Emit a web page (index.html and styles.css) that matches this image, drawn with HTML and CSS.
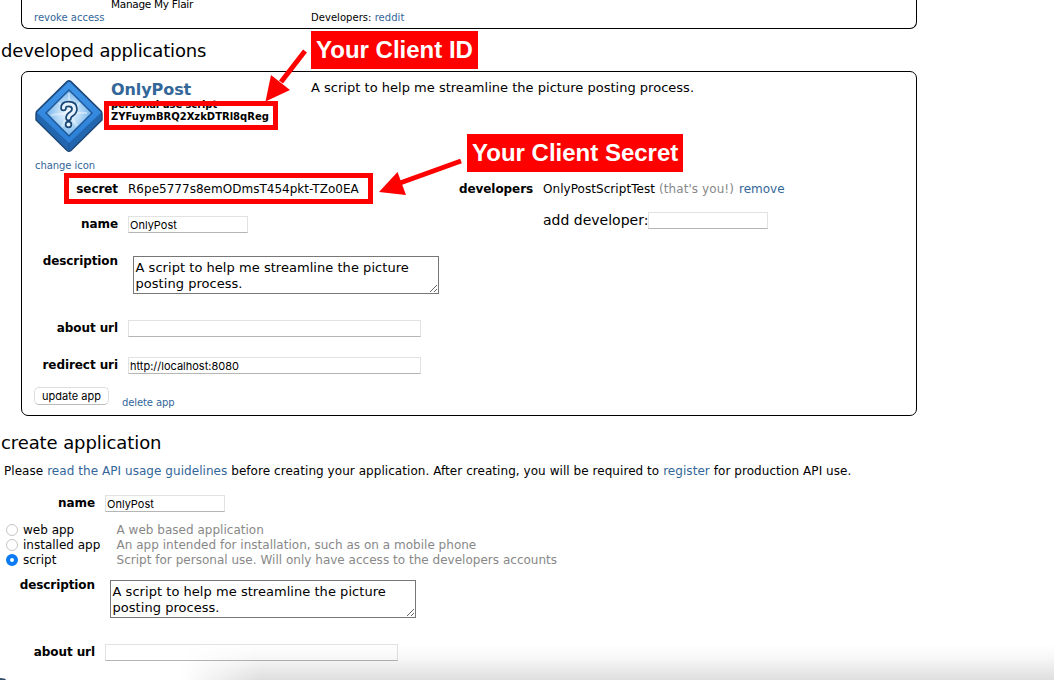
FILE: index.html
```
<!DOCTYPE html>
<html lang="en">
<head>
<meta charset="utf-8">
<title>authorized applications</title>
<link rel="stylesheet" href="styles.css">
</head>
<body>
<main class="page">
  <section class="card authorized">
    <div class="auth-left">
      <span class="scope">Manage My Flair</span>
      <a class="small revoke">revoke access</a>
    </div>
    <div class="small auth-devs">Developers: <a>reddit</a></div>
  </section>

  <h1 class="heading">developed applications</h1>

  <section class="card app">
    <header class="app-head">
      <svg class="app-icon" viewBox="0 0 68 74" width="68" height="74">
        <defs>
          <linearGradient id="rim" x1="0" y1="0" x2="0" y2="1"><stop offset="0" stop-color="#3f95e8"/><stop offset="1" stop-color="#2b7fd6"/></linearGradient>
          <radialGradient id="face"><stop offset="0" stop-color="#f4faff"/><stop offset=".5" stop-color="#b9dbf6"/><stop offset="1" stop-color="#6fb2ec"/></radialGradient>
        </defs>
        <path d="M32 2.500Q34 1 36 2.500L66 32Q67 33 67 35V41L36 71.500Q34 73 32 71.500L1 41V35Q1 33 2 32Z" fill="#2266b0" stroke="#1c4675" stroke-width="1.400"/>
        <path d="M34 2.500L66 33.500L34 64L2 33.500Z" fill="url(#rim)"/>
        <path d="M34 64V71" stroke="#1c5596" stroke-width="1"/>
        <path d="M34 11L57 34L34 57L11 34Z" fill="url(#face)" stroke="#1c5596" stroke-width="1.400"/>
        <path d="M34 34L24 24M34 34L45 24M34 34L16 36M34 34L52 34M34 34L27 48M34 34L42 47M34 34L34 14" stroke="#fff" stroke-opacity=".4" stroke-width="2"/>
        <path d="M28.500 29Q28.500 25 33.500 25Q39.500 25 39.500 30Q39.500 33 36.500 34.800Q33.500 36.500 33.500 39" fill="none" stroke="#194572" stroke-width="6.600" stroke-linecap="round"/>
        <circle cx="33.500" cy="45.500" r="3.700" fill="#194572"/>
        <path d="M28.500 29Q28.500 25 33.500 25Q39.500 25 39.500 30Q39.500 33 36.500 34.800Q33.500 36.500 33.500 39" fill="none" stroke="#e6f3ff" stroke-width="3.200" stroke-linecap="round"/>
        <circle cx="33.500" cy="45.500" r="2" fill="#e6f3ff"/>
      </svg>
      <div class="app-id">
        <h2 class="app-name">OnlyPost</h2>
        <span class="app-type">personal use script</span>
        <span class="client-id">ZYFuymBRQ2XzkDTRl8qReg</span>
      </div>
      <p class="app-about">A script to help me streamline the picture posting process.</p>
    </header>
    <a class="small change-icon">change icon</a>

    <div class="columns">
      <div class="fields">
        <div class="row row-secret"><label>secret</label><span class="secret">R6pe5777s8emODmsT454pkt-TZo0EA</span></div>
        <div class="row row-name"><label>name</label><input class="input" value="OnlyPost"></div>
        <div class="row row-desc"><label>description</label><textarea class="area">A script to help me streamline the picture posting process.</textarea></div>
        <div class="row row-about"><label>about url</label><input class="input wide"></div>
        <div class="row row-redirect"><label>redirect uri</label><input class="input wide" value="http://localhost:8080"></div>
      </div>
      <div class="devs">
        <div class="devs-line"><b>developers</b><span class="dev-name">OnlyPostScriptTest</span><span class="you">(that's you!)</span><a class="remove">remove</a></div>
        <div class="add-line"><span>add developer:</span><input class="input"></div>
      </div>
    </div>
    <div class="actions"><button class="button">update app</button><a class="small delete">delete app</a></div>
  </section>

  <h1 class="heading create">create application</h1>
  <p class="notice">Please <a>read the API usage guidelines</a> before creating your application. After creating, you will be required to <a>register</a> for production API use.</p>

  <form class="fields new-app">
    <div class="row new-name"><label>name</label><input class="input" value="OnlyPost"></div>
    <div class="types">
      <label class="type"><input type="radio" name="type"><span class="type-name">web app</span><span class="type-about">A web based application</span></label>
      <label class="type"><input type="radio" name="type"><span class="type-name">installed app</span><span class="type-about">An app intended for installation, such as on a mobile phone</span></label>
      <label class="type"><input type="radio" name="type" checked><span class="type-name">script</span><span class="type-about">Script for personal use. Will only have access to the developers accounts</span></label>
    </div>
    <div class="row new-desc"><label>description</label><textarea class="area">A script to help me streamline the picture posting process.</textarea></div>
    <div class="row new-about"><label>about url</label><input class="input wide"></div>
  </form>

  <div class="bottom-shade"></div>
  <div class="corner"></div>

  <div class="mark mark-id"></div>
  <div class="mark mark-secret"></div>
  <div class="callout callout-id">Your Client ID</div>
  <div class="callout callout-secret">Your Client Secret</div>
  <svg class="arrows" width="1054" height="680" viewBox="0 0 1054 680">
    <path d="M305 51L281 82" stroke="#fe0000" stroke-width="5"/>
    <path d="M265.500 101.500L271 75L290 90Z" fill="#fe0000"/>
    <path d="M461 161L400 183" stroke="#fe0000" stroke-width="5"/>
    <path d="M379 192L397.500 172L406 195Z" fill="#fe0000"/>
  </svg>
</main>
</body>
</html>
```
FILE: styles.css
```
* { box-sizing: border-box; }
body { margin: 0; background: #fff; color: #000; font-family: "DejaVu Sans", Verdana, sans-serif; font-size: 12px; }
a { color: #369; text-decoration: none; }
h1, h2, p { margin: 0; font-weight: normal; }
.page { position: relative; width: 1054px; height: 680px; overflow: hidden; }
.card { width: 896px; margin-left: 21px; border: 1px solid #000; border-radius: 7px; }
.small { font-size: 10px; line-height: 12px; }
.authorized { height: 29px; border-top: 0; border-radius: 0 0 7px 7px; display: flex; }
.auth-left { width: 289px; padding-left: 12px; display: flex; flex-direction: column; }
.scope { margin-left: 77px; font-size: 10.500px; line-height: 8px; letter-spacing: -.29px; align-self: flex-start; white-space: nowrap; }
.revoke { margin-top: 4px; align-self: flex-start; }
.auth-devs { padding-top: 12px; letter-spacing: .04px; }
.heading { height: 42px; padding: 10px 0 0 1px; font-size: 18px; line-height: 24px; letter-spacing: -.15px; }
.app { height: 345px; }
.app-head { display: flex; height: 85px; padding: 7px 0 0 13px; }
.app-icon { flex: none; }
.app-id { flex: none; width: 208px; padding: 1px 0 0 8px; display: flex; flex-direction: column; align-items: flex-start; }
.app-name { font-size: 16px; line-height: 20px; font-weight: bold; letter-spacing: -.08px; color: #369; }
.app-type { font-size: 10px; line-height: 10px; font-weight: bold; letter-spacing: -.1px; }
.client-id { font-size: 10px; line-height: 13px; font-weight: bold; }
.app-about { font-size: 13px; line-height: 17px; letter-spacing: .015px; }
.change-icon { display: block; margin: 3px 0 0 13px; height: 12px; letter-spacing: -.06px; }
.columns { display: flex; height: 212px; }
.fields { width: 437px; }
.row { display: flex; }
.row > label { width: 96px; margin-right: 10px; text-align: right; font-weight: bold; line-height: 16px; letter-spacing: -.08px; }
.row-secret { height: 44px; padding-top: 9px; }
.secret { line-height: 16px; letter-spacing: .02px; }
.row-name { height: 37px; }
.row-desc { height: 67px; }
.row-about { height: 37px; }
.row-desc .area, .new-desc .area { margin-top: 3px; }
.input { width: 120px; height: 17px; padding: 1px 1px 0; border: 1px solid #e2e2e2; border-bottom-color: #b5b5b5; background: #fff; font: 11px "Inter", sans-serif; outline: 0; }
.wide { width: 293px; }
.area { width: 306px; height: 38px; margin: 0 0 0 5px; padding: 3px 2px 0 1.500px; border: 1px solid #777; font: 13px/16px "DejaVu Sans", sans-serif; letter-spacing: .04px; overflow: hidden; }
.devs { padding-top: 9px; }
.devs-line { display: flex; line-height: 16px; height: 31px; }
.devs-line b { letter-spacing: -.08px; }
.dev-name { margin-left: 10px; letter-spacing: .05px; }
.you { margin-left: 4px; color: #888; letter-spacing: .08px; }
.remove { margin-left: 5px; }
.add-line { display: flex; padding-left: 84px; font-size: 14px; line-height: 17px; }
.actions { display: flex; padding-left: 12px; }
.button { width: 75px; height: 18px; margin-top: 3px; padding: 0; border: 1px solid #ddd; border-bottom-color: #bbb; border-radius: 5px; background: #fff; font: 11px/15px "Inter", sans-serif; }
.delete { margin: 13px 0 0 13px; letter-spacing: -.1px; }
.create { height: 46px; padding-top: 15px; letter-spacing: -.1px; }
.notice { height: 33px; padding-left: 4px; line-height: 18px; letter-spacing: .054px; white-space: nowrap; }
.new-app { width: 700px; }
.new-app .row > label { width: 95px; }
.new-name { height: 27px; }
.types { height: 55px; padding-left: 6px; }
.type { display: flex; align-items: center; height: 15px; }
.type input { appearance: none; width: 12px; height: 12px; margin: 0 5px 0 0; border: 1px solid #c4c4c4; border-radius: 50%; background: #fff; }
.type input:checked { border: 4px solid #0a7bf2; }
.type-name { width: 93.500px; }
.type-about { color: #888; letter-spacing: .02px; white-space: nowrap; }
.new-desc { height: 67px; }
.bottom-shade { position: absolute; left: 180px; right: 0; bottom: 0; height: 36px; background: linear-gradient(to bottom, transparent, rgba(0,0,0,.03) 40%, rgba(0,0,0,.13)); mask-image: linear-gradient(to right, transparent, #000 80px); }
.corner { position: absolute; left: 0; bottom: 0; width: 6px; height: 2px; background: #35506c; border-top-right-radius: 6px 2px; }
.mark { position: absolute; border: 5px solid #fe0000; }
.mark-id { left: 104px; top: 101px; width: 174px; height: 29px; }
.mark-secret { left: 64px; top: 173px; width: 309px; height: 31px; }
.callout { position: absolute; background: #fe0000; color: #fff; font: bold 24px/38px "Liberation Sans", sans-serif; padding-left: 5px; white-space: nowrap; }
.callout-id { left: 311px; top: 31px; width: 167px; height: 38px; }
.callout-secret { left: 467px; top: 134px; width: 216px; height: 38px; }
.arrows { position: absolute; left: 0; top: 0; pointer-events: none; }
```
